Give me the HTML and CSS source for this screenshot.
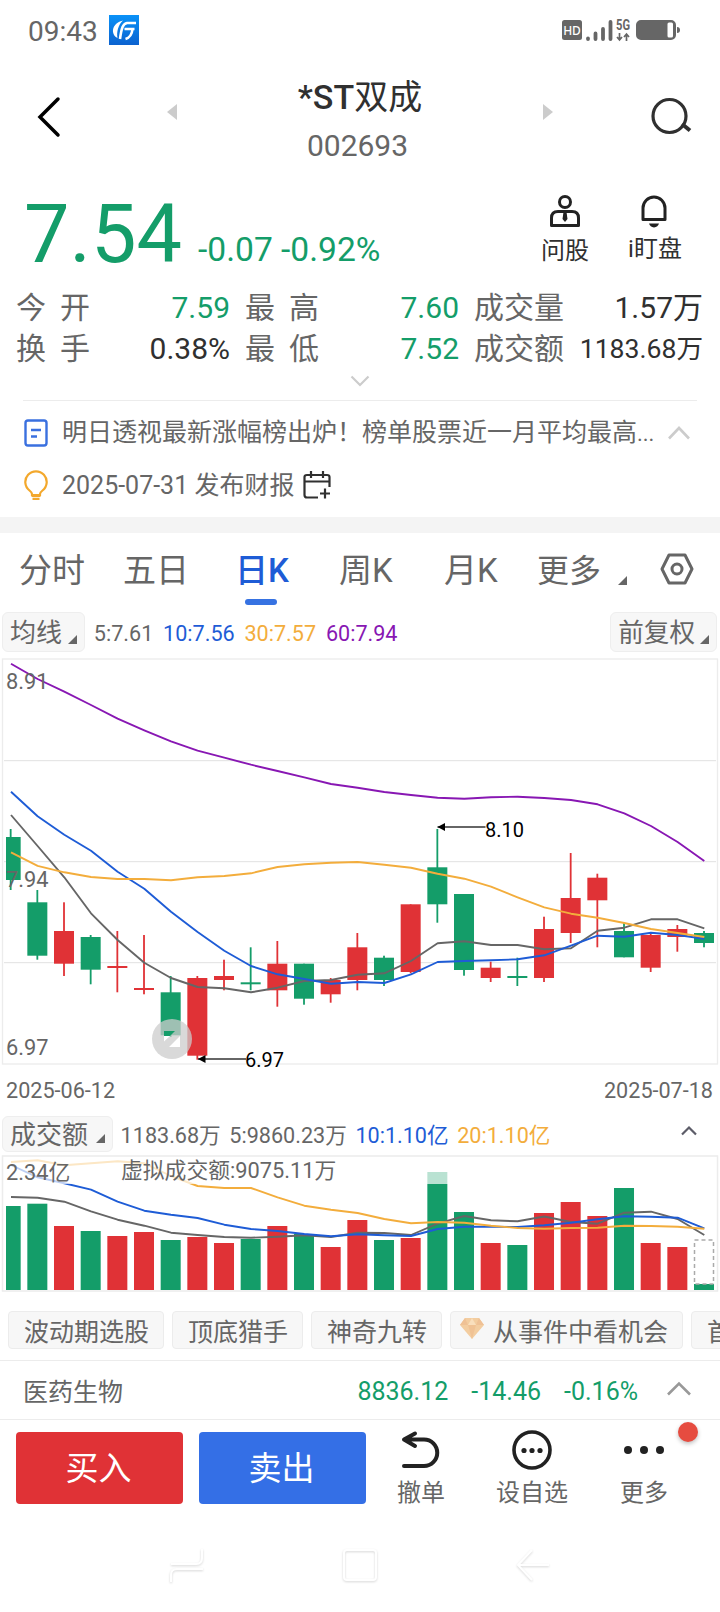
FILE: index.html
```html
<!DOCTYPE html>
<html lang="zh-CN">
<head>
    <meta charset="UTF-8">
    <meta name="viewport" content="width=device-width, initial-scale=1.0">
    <title>*ST双成 002693</title>
    <link rel="stylesheet" href="styles.css">
</head>
<body>
<div class="phone">

    <div class="status-bar">
        <span class="clock">09:43</span>
        <svg class="app-icon" width="30" height="30" viewBox="0 0 30 30">
            <defs>
                <linearGradient id="appBg" x1="0" y1="0" x2="0" y2="1">
                    <stop offset="0" stop-color="#0a92f8"/>
                    <stop offset="1" stop-color="#0b62cf"/>
                </linearGradient>
            </defs>
            <rect width="30" height="30" fill="url(#appBg)"/>
            <path d="M14 5.500C7 7 3.500 12 4 17C4.500 20 6 22 8.500 23C7.500 17 9 10 14 5.500Z" fill="#fff"/>
            <path d="M27 8H18C14 8.500 12.500 13 11 24M25.500 14H15.500M23.500 14C23 19.500 21.500 22.500 16.500 24" fill="none" stroke="#fff" stroke-width="2.600"/>
        </svg>
        <svg class="status-icons" width="120" height="22" viewBox="562 19 120 22">
            <rect x="562" y="20" width="20" height="20" rx="2.500" fill="#666"/>
            <text x="572" y="34.500" class="hd" text-anchor="middle">HD</text>
            <path d="M588 38.500v0.500M595.500 33.500v5.500M603 29v10M610.500 22v17" stroke="#666" stroke-width="3.800" stroke-linecap="round"/>
            <text x="616" y="30" class="net" textLength="14" lengthAdjust="spacingAndGlyphs">5G</text>
            <path d="M619.500 33v7M617 37l2.500 3l2.500-3M626.500 41v-7M624 37l2.500-3l2.500 3" fill="none" stroke="#666" stroke-width="1.700"/>
            <rect x="637" y="21" width="38" height="18" rx="4" fill="#666" stroke="#666" stroke-width="2"/>
            <rect x="667.500" y="22.500" width="5.500" height="15" rx="1.500" fill="#fff"/>
            <path d="M677 27q3 0 3 3t-3 3z" fill="#666"/>
        </svg>
    </div>

    <div class="header">
        <svg class="back" width="26" height="42" viewBox="0 0 26 42"><path d="M22 3L4 21L22 39" fill="none" stroke="#000" stroke-width="3.500" stroke-linecap="round"/></svg>
        <svg class="prev" width="10" height="16" viewBox="0 0 10 16"><path d="M10 0V16L0 8Z" fill="#ccc"/></svg>
        <div class="title">
            <div class="stock-name">*ST<span>双成</span></div>
            <div class="stock-code">002693</div>
        </div>
        <svg class="next" width="10" height="16" viewBox="0 0 10 16"><path d="M0 0V16L10 8Z" fill="#ccc"/></svg>
        <svg class="search" width="42" height="42" viewBox="0 0 42 42"><circle cx="19.500" cy="20" r="16.500" fill="none" stroke="#303030" stroke-width="3.200"/><path d="M32 28L40 34.500" stroke="#303030" stroke-width="4"/></svg>
    </div>

    <div class="quote">
        <span class="price">7.54</span>
        <span class="change">-0.07 -0.92%</span>
        <div class="quote-btn ask">
            <svg width="34" height="36" viewBox="0 0 34 36" fill="none" stroke="#222" stroke-width="3">
                <circle cx="17" cy="9" r="5.500"/>
                <path d="M3.500 32.500V25Q3.500 18.500 10 18.500H24Q30.500 18.500 30.500 25V32.500Z" stroke-linejoin="round"/>
                <path d="M15.500 19h3l1 7l-2.500 3l-2.500-3z" fill="#222" stroke="none"/>
            </svg>
            <span>问股</span>
        </div>
        <div class="quote-btn watch">
            <svg width="34" height="36" viewBox="0 0 34 36" fill="none" stroke="#222" stroke-width="3">
                <path d="M5 26.500V15A11 11 0 0 1 27 15V26.500Z" stroke-linejoin="round"/>
                <path d="M11 30.500H21Q20 34 16 34.500Q12 34 11 30.500Z" fill="#222" stroke="none"/>
            </svg>
            <span>i盯盘</span>
        </div>
    </div>

    <div class="stats">
        <span class="label wide">今开</span><span class="value green">7.59</span>
        <span class="label wide">最高</span><span class="value green">7.60</span>
        <span class="label">成交量</span><span class="value">1.57万</span>
        <span class="label wide">换手</span><span class="value">0.38%</span>
        <span class="label wide">最低</span><span class="value green">7.52</span>
        <span class="label">成交额</span><span class="value small">1183.68万</span>
    </div>
    <div class="expand">
        <svg width="20" height="12" viewBox="0 0 20 12"><path d="M1.500 1.500L10 10L18.500 1.500" fill="none" stroke="#ccc" stroke-width="2.200"/></svg>
    </div>

    <div class="notices">
        <div class="notice">
            <svg width="24" height="28" viewBox="0 0 24 28" fill="none" stroke="#3a70df" stroke-width="2.400"><rect x="1.500" y="1.500" width="21" height="25" rx="2.500"/><path d="M7 11H17M7 17.500H13"/></svg>
            <span class="notice-text">明日透视最新涨幅榜出炉！榜单股票近一月平均最高<span class="dots">...</span></span>
            <svg class="fold" width="24" height="14" viewBox="0 0 24 14"><path d="M2 12.500L12 2L22 12.500" fill="none" stroke="#ccc" stroke-width="2.600"/></svg>
        </div>
        <div class="notice">
            <svg width="24" height="30" viewBox="0 0 24 30" fill="none" stroke="#f3a82c" stroke-width="2.200"><path d="M8 25V24Q8 22.500 5.500 20.500A10.700 10.700 0 1 1 18.500 20.500Q16 22.500 16 24V25Z"/><path d="M7.500 26H16.500M8.500 28.800H15.500"/></svg>
            <span class="notice-text">2025-07-31 发布财报</span>
            <svg class="calendar" width="28" height="28" viewBox="0 0 28 28" fill="none" stroke="#303030" stroke-width="2.200"><path d="M15 26.500H4Q1.500 26.500 1.500 24V6Q1.500 4 4 4H24Q26.500 4 26.500 6V16M1.500 10.500H26.500M8 0V7M20 0V7M22 17.500V27.500M17 22.500H27"/></svg>
        </div>
    </div>

    <div class="tabs">
        <span class="tab">分时</span>
        <span class="tab">五日</span>
        <span class="tab active">日K</span>
        <span class="tab">周K</span>
        <span class="tab">月K</span>
        <span class="tab more">更多</span>
        <i class="corner"></i>
        <svg class="setting" width="34" height="32" viewBox="0 0 34 32" fill="none" stroke="#666" stroke-width="3"><path d="M9 2H25L32 16L25 30H9L2 16Z" stroke-linejoin="round"/><circle cx="17" cy="16" r="5"/></svg>
    </div>

    <div class="legend">
        <span class="tag">均线<i class="corner"></i></span>
        <span class="ma">5:7.61</span>
        <span class="ma blue">10:7.56</span>
        <span class="ma orange">30:7.57</span>
        <span class="ma purple">60:7.94</span>
        <span class="tag right">前复权<i class="corner"></i></span>
    </div>

    <svg id="kline" class="chart" width="720" height="412" viewBox="0 656 720 412"></svg>

    <div class="dates"><span>2025-06-12</span><span>2025-07-18</span></div>

    <div class="legend volume-legend">
        <span class="tag">成交额<i class="corner"></i></span>
        <span class="ma">1183.68万</span>
        <span class="ma">5:9860.23万</span>
        <span class="ma blue">10:1.10亿</span>
        <span class="ma orange">20:1.10亿</span>
        <svg class="fold" width="18" height="12" viewBox="0 0 18 12"><path d="M2 9.500L9 2.500L16 9.500" fill="none" stroke="#5c5c68" stroke-width="2.200"/></svg>
    </div>

    <svg id="volume" class="chart" width="720" height="140" viewBox="0 1154 720 140"></svg>

    <div class="chips">
        <span class="chip">波动期选股</span>
        <span class="chip">顶底猎手</span>
        <span class="chip">神奇九转</span>
        <span class="chip gem">
            <svg width="24" height="22" viewBox="0 0 24 22"><path d="M5 1H19L24 8L12 22L0 8Z" fill="#f3cda0"/><path d="M5 1L8 8H0ZM19 1L16 8H24Z" fill="#efc195"/><path d="M8 8H16L12 22Z" fill="#f0c294"/><path d="M8 8L12 1L16 8Z" fill="#f9dfbd"/></svg>从事件中看机会</span>
        <span class="chip">首</span>
    </div>

    <div class="sector">
        <span class="sector-name">医药生物</span>
        <span class="num">8836.12</span>
        <span class="num">-14.46</span>
        <span class="num">-0.16%</span>
        <svg width="26" height="15" viewBox="0 0 26 15"><path d="M2 13.500L13 2.500L24 13.500" fill="none" stroke="#999" stroke-width="2.600"/></svg>
    </div>

    <div class="actions">
        <div class="btn buy">买入</div>
        <div class="btn sell">卖出</div>
        <div class="action">
            <svg width="42" height="42" viewBox="0 0 42 42" fill="none" stroke="#222" stroke-width="4" stroke-linecap="round" stroke-linejoin="round"><path d="M15 4.500L4 10.500L15 17M5 10.500H24A13 13 0 0 1 24 37H4"/></svg>
            <span>撤单</span>
        </div>
        <div class="action wide">
            <svg width="42" height="42" viewBox="0 0 42 42"><circle cx="21" cy="21" r="18" fill="none" stroke="#222" stroke-width="3.600"/><g fill="#222"><circle cx="13" cy="21.500" r="2.600"/><circle cx="21" cy="21.500" r="2.600"/><circle cx="29" cy="21.500" r="2.600"/></g></svg>
            <span>设自选</span>
        </div>
        <div class="action last">
            <svg width="42" height="42" viewBox="0 0 42 42" fill="#222"><circle cx="5" cy="21" r="4"/><circle cx="21" cy="21" r="4"/><circle cx="37" cy="21" r="4"/></svg>
            <span>更多</span>
            <i class="badge"></i>
        </div>
    </div>

    <div class="nav-bar">
        <svg width="34" height="36" viewBox="0 0 34 36"><path d="M1 17H26Q32 17 32 11V2M1 35V28Q1 22 7 22H33"/></svg>
        <svg width="36" height="36" viewBox="0 0 36 36"><rect x="2" y="3" width="32" height="30" rx="3"/></svg>
        <svg width="34" height="36" viewBox="0 0 34 36"><path d="M16 3L2 18L16 33M2 18H33"/></svg>
    </div>
</div>
<script src="script.js"></script>
</body>
</html>
```

FILE: styles.css
```css
body {
    margin: 0;
    background: #fff;
    font-family: Roboto, "Noto Sans CJK SC", sans-serif;
    color: #666;
}

.phone {
    width: 720px;
    height: 1612px;
    overflow: hidden;
    background: #fff;
}

svg {
    display: block;
    flex: none;
}

/* status bar */
.status-bar {
    display: flex;
    align-items: center;
    height: 60px;
    padding: 0 38px 0 28px;
}

.clock {
    font-size: 28px;
    line-height: 32px;
    padding-top: 3px;
}

.app-icon {
    margin-left: 11px;
}

.status-icons {
    margin-left: auto;
    overflow: visible;
}

.hd {
    font-family: "Noto Sans", sans-serif;
    font-size: 12px;
    font-weight: 500;
    fill: #fff;
}

.net {
    font-size: 14px;
    font-weight: 700;
    fill: #666;
}

/* header */
.header {
    display: flex;
    height: 120px;
    padding: 0 28px 0 36px;
}

.back {
    margin-top: 36px;
}

.prev {
    margin: 44px 0 0 105px;
}

.title {
    width: 366px;
    text-align: center;
    margin-top: 16px;
}

.stock-name {
    font-size: 34px;
    line-height: 42px;
    font-weight: 500;
    color: #303030;
}

.stock-name span {
    font-weight: 400;
}

.stock-code {
    font-size: 30px;
    line-height: 36px;
    margin: 10px 5px 0 0;
}

.next {
    margin-top: 44px;
}

.search {
    margin: 36px 0 0 auto;
}

/* price */
.quote {
    display: flex;
    height: 107px;
}

.price {
    font-size: 81px;
    line-height: 96px;
    width: 174px;
    padding: 7px 0 0 24px;
    color: #149d69;
}

.change {
    font-size: 33.6px;
    line-height: 40px;
    margin-top: 50px;
    width: 339px;
    color: #149d69;
}

.quote-btn {
    display: flex;
    flex-direction: column;
    align-items: center;
    width: 56px;
    padding-top: 13px;
    font-size: 24px;
    line-height: 32px;
    color: #303030;
    white-space: nowrap;
}

.quote-btn span {
    margin-top: 6px;
}

.quote-btn.watch {
    margin-left: 34px;
}

.quote-btn.watch span {
    margin-top: 4px;
}

/* stats */
.stats {
    display: grid;
    grid-template-columns: 84px 130px 86px 143px 104px 140px;
    grid-auto-rows: 41px;
    padding-left: 16px;
    font-size: 30px;
    line-height: 41px;
    white-space: nowrap;
}

.label.wide {
    letter-spacing: 14px;
}

.label:nth-child(6n + 3),
.label:nth-child(6n + 5) {
    padding-left: 15px;
}

.value {
    text-align: right;
    color: #303030;
}

.value.green {
    color: #149d69;
}

.value.small {
    font-size: 26.6px;
}

.expand {
    display: flex;
    justify-content: center;
    padding-top: 6px;
    height: 25px;
}

/* notices */
.notices {
    border-bottom: 16px solid #f4f4f4;
    height: 117px;
}

.notice {
    display: flex;
    align-items: center;
    height: 42px;
    margin: 0 23px;
    padding-left: 1px;
    font-size: 25px;
    line-height: 32px;
    white-space: nowrap;
}

.notice:first-child {
    border-top: 1px solid #ececec;
    height: 63px;
}

.notice-text {
    margin: 1px 0 0 14px;
}

.dots {
    font-size: 22px;
}

.notice .fold {
    margin-left: auto;
    margin-right: 6px;
}

.calendar {
    margin-left: 9px;
}

/* tabs */
.tabs {
    display: grid;
    grid-template-columns: 104px 110px 106px 105px 93px 81px 42px 34px;
    height: 76px;
    padding-left: 19px;
    font-size: 33px;
    line-height: 40px;
}

.tab {
    padding-top: 18px;
}

.tab.more {
    font-size: 32px;
}

.tab.active {
    padding-left: 2px;
    color: #1e5cd6;
    font-weight: 500;
}

.tab.active::after {
    content: "";
    display: block;
    width: 32px;
    height: 6px;
    margin: 8px 0 0 10px;
    border-radius: 3px;
    background: #3672e2;
}

.corner {
    display: inline-block;
    border-left: 9px solid transparent;
    border-bottom: 9px solid #666;
    width: 0;
    height: 0;
}

.tabs .corner {
    margin-top: 43px;
}

.setting {
    margin-top: 20px;
}

/* chart legends */
.legend {
    display: flex;
    align-items: center;
    height: 47px;
    padding: 0 3px 0 2px;
    font-size: 21.6px;
    white-space: nowrap;
}

.tag {
    box-sizing: border-box;
    display: flex;
    align-items: center;
    height: 40px;
    padding: 0 7px 2px;
    border: 1px solid #eee;
    border-radius: 6px;
    background: #f7f7f7;
    font-size: 26px;
    margin: -2px -1px 0 0;
}

.tag .corner {
    margin: 18px 0 0 6px;
}

.tag.right {
    margin: -2px 0 0 auto;
    font-size: 25.6px;
}

.tag.right .corner {
    margin-left: 5px;
}

.ma {
    margin: 2px 0 0 9.8px;
}

.blue {
    color: #1e5cd6;
}

.orange {
    color: #f3ad3c;
}

.purple {
    color: #8817b3;
}

/* charts */
.chart {
    overflow: visible;
}

.axis {
    font-size: 21.8px;
    fill: #666;
}

.mark {
    font-size: 20px;
    fill: #000;
}

.dates {
    display: flex;
    justify-content: space-between;
    padding: 0 7px 0 6px;
    height: 45px;
    font-size: 21.6px;
    line-height: 46px;
}

.volume-legend {
    height: 41px;
}

.volume-legend .tag {
    height: 36px;
    margin-top: 0;
}

.volume-legend .tag .corner {
    margin: 11px 0 0 8px;
}

.volume-legend .ma {
    margin: 0 0 0 8.6px;
}

.volume-legend .fold {
    margin: -6px 19px 0 auto;
}

/* strategy chips */
.chips {
    display: flex;
    gap: 8px;
    height: 67px;
    box-sizing: border-box;
    padding: 17px 0 0 8px;
    border-bottom: 1px solid #ececec;
}

.chip {
    box-sizing: border-box;
    display: flex;
    flex: none;
    align-items: center;
    height: 38px;
    padding: 0 14px 1px 15px;
    border: 1px solid #ececec;
    border-radius: 4px;
    background: #f7f7f7;
    font-size: 25px;
}

.gem {
    padding-left: 9px;
}

.gem svg {
    margin: -4px 9px 0 0;
}

/* sector */
.sector {
    display: flex;
    align-items: center;
    height: 58px;
    padding: 0 28px 0 23px;
    border-bottom: 1px solid #ececec;
    font-size: 25px;
}

.sector-name {
    margin-right: auto;
}

.num {
    color: #149d69;
    margin: 2px 23px 0 0;
}

.sector svg {
    margin: -3px 0 0 5px;
}

/* bottom actions */
.actions {
    display: flex;
    height: 98px;
    padding: 12px 0 0 16px;
}

.btn {
    box-sizing: border-box;
    width: 167px;
    height: 72px;
    margin-right: 16px;
    padding-right: 2px;
    border-radius: 4px;
    color: #fff;
    font-size: 33px;
    line-height: 74px;
    text-align: center;
}

.buy {
    background: #e03236;
}

.sell {
    background: #346fe6;
}

.action {
    position: relative;
    display: flex;
    flex-direction: column;
    align-items: center;
    width: 78px;
    margin-top: -3px;
    font-size: 24px;
    line-height: 32px;
}

.action span {
    margin-top: 6px;
}

.action.wide {
    margin-left: 33px;
}

.action.last {
    margin-left: 34px;
}

.badge {
    position: absolute;
    left: 73px;
    top: -7px;
    width: 20px;
    height: 20px;
    border-radius: 50%;
    background: #e64c40;
    box-shadow: 0 2px 4px rgba(0, 0, 0, 0.25);
}

/* system navigation */
.nav-bar {
    display: flex;
    justify-content: space-between;
    padding: 17px 170px 0;
}

.nav-bar svg {
    fill: none;
    stroke: #fff;
    stroke-width: 2;
    filter: drop-shadow(0 1px 1px rgba(0, 0, 0, 0.16));
}
```

FILE: script.js
```js
const GREEN = "#149d69";
const RED = "#e03236";
const STEP = 26.667;
const LINE = { ma5: "#666", ma10: "#1e5cd6", ma30: "#f3ad3c", ma60: "#8817b3" };

// color, body top, body bottom, wick top, wick bottom
const candles = [
    ["g", 837, 880, 829, 890], ["g", 902.3, 955.7, 890, 959.7], ["r", 931, 963.7, 902.3, 976],
    ["g", 937, 969.7, 935, 984.3], ["r", 966, 968, 931, 992.3], ["r", 988, 990, 935, 994.3],
    ["g", 992.3, 1035.3, 976, 1037], ["r", 978, 1055.7, 976, 1059.7], ["r", 976, 980, 959.7, 990.3],
    ["g", 982.3, 984.3, 947.3, 990.3], ["r", 963.7, 990.3, 941, 1006.7], ["g", 963.7, 998.7, 963.7, 1004.7],
    ["r", 980, 994.3, 978, 1002.7], ["r", 947.3, 980, 933, 990.3], ["g", 957.7, 980, 955.7, 986],
    ["r", 904.3, 972, 904.3, 973.3], ["g", 867.3, 904.3, 829, 922.7], ["g", 894, 970, 894, 975.7],
    ["r", 967.7, 978, 961.7, 982], ["g", 976, 978, 957.7, 986], ["r", 929, 978, 916.7, 982],
    ["r", 898, 933, 853, 943], ["r", 877.7, 900.3, 873.7, 947.3], ["g", 931, 957.3, 922.7, 957.3],
    ["r", 935, 967.7, 933, 972], ["r", 929, 937, 925, 951.7], ["g", 933, 943, 931, 947.3]
];

const priceLines = [
    [LINE.ma60, [663.7, 679, 691.7, 705, 718.7, 730.3, 741.3, 750.7, 757.7, 764.7, 771, 777.3, 784, 787.8, 792, 795, 797.7, 798.7, 797.3, 796.7, 798, 800, 804.3, 813.3, 826, 842, 861]],
    [LINE.ma5, [815, 846, 877.3, 913.3, 940, 962.7, 978, 987, 988.3, 992.3, 987.7, 981, 980, 974.7, 973.3, 961, 943.3, 941.3, 945, 945, 949.3, 948.3, 930.7, 927.7, 919.3, 919.3, 928.3]],
    [LINE.ma10, [791.7, 816.3, 834.7, 850.7, 871.7, 888.7, 911.7, 932, 950.7, 966, 974.3, 979, 983.7, 982, 983, 974.3, 962, 961, 960.3, 959.3, 955.3, 945.7, 935.7, 936.7, 932.7, 935, 938.7]],
    [LINE.ma30, [852.3, 865.8, 872.3, 877, 879, 879, 880.3, 877.3, 876, 873.3, 867, 864.3, 862.7, 862, 864.7, 867.7, 873.7, 878.7, 886.7, 897.3, 907.3, 913.7, 917.7, 923, 929, 933, 937]]
];

const volumes = [1206, 1203.7, 1226, 1231, 1236, 1232, 1240, 1237, 1243, 1239, 1226, 1234, 1247, 1220, 1240, 1238, 1172, 1212, 1243, 1245, 1213, 1202, 1216, 1188, 1243, 1247, 1284];

const volumeLines = [
    [LINE.ma5, [1197, 1197.7, 1201.7, 1211.3, 1219.7, 1225.7, 1232.7, 1235, 1237, 1237.7, 1236.7, 1235.3, 1237, 1232.7, 1233, 1235, 1223.7, 1216, 1220.3, 1221.3, 1216.5, 1222, 1223.7, 1212.7, 1211.7, 1219, 1235]],
    [LINE.ma10, [1165, 1177.3, 1183.3, 1189.7, 1201.7, 1210.7, 1214.7, 1218, 1224.7, 1229, 1231, 1234, 1236.3, 1234.3, 1235.3, 1236, 1229, 1226.7, 1226.7, 1227, 1225.3, 1222.7, 1219.3, 1216.3, 1216.7, 1217.7, 1228.3]],
    [LINE.ma30, [1162, 1160.3, 1165.3, 1163.3, 1161.3, 1163.3, 1176, 1186, 1188, 1188, 1197.3, 1205.7, 1209.7, 1213, 1219, 1223.3, 1222, 1222.7, 1225.7, 1228, 1228.7, 1228, 1227.7, 1225.7, 1226, 1226.7, 1228.7]]
];

function centerX(i) {
    return 10.67 + STEP * i;
}

function rect(x, y, w, h, fill) {
    return `<rect x="${x}" y="${y}" width="${w}" height="${h}" fill="${fill}"/>`;
}

// bars are 20px wide, the first one is cut by the chart edge
function bar(i, top, bottom, fill) {
    const left = Math.max(6, centerX(i) - 10);
    return rect(left, top, centerX(i) + 10 - left, bottom - top, fill);
}

function polyline(color, ys) {
    const points = ys.map((y, i) => `${(centerX(i) + 0.3).toFixed(1)},${y}`).join(" ");
    return `<polyline points="${points}" fill="none" stroke="${color}" stroke-width="1.9" stroke-linejoin="round"/>`;
}

function text(x, y, cls, value) {
    return `<text x="${x}" y="${y}" class="${cls}">${value}</text>`;
}

function arrow(x, y) {
    return `<path d="M${x} ${y}H${x + 48}" stroke="#333" stroke-width="1.3"/><path d="M${x} ${y}l7.500 -4v8z" fill="#000"/>`;
}

function drawKline() {
    let out = '<rect x="2.500" y="659" width="715" height="405" fill="none" stroke="#ececec" stroke-width="1.3"/>';
    [760.5, 861.5, 962.5].forEach(y => {
        out += rect(4, y - 0.5, 712, 1.2, "#e6e6e6");
    });
    candles.forEach(([c, top, bottom, high, low], i) => {
        const fill = c === "g" ? GREEN : RED;
        out += rect(centerX(i) - 0.9, high, 1.8, low - high, fill);
        out += bar(i, top, bottom, fill);
    });
    priceLines.forEach(([color, ys]) => {
        out += polyline(color, ys);
    });
    out += text(6, 689, "axis", "8.91") + text(6, 887, "axis", "7.94") + text(6, 1055, "axis", "6.97");
    out += arrow(437.5, 827) + text(485, 837, "mark", "8.10");
    out += arrow(198, 1059) + text(245, 1067, "mark", "6.97");
    // fullscreen button
    out += '<circle cx="172" cy="1039" r="20" fill="#ccc" fill-opacity="0.75"/>';
    out += `<path d="M164 1031h11l-5 5h-6z" fill="${GREEN}"/><path d="M164 1036h6l-6 5.500zM180 1036v11h-11z" fill="#fff"/>`;
    document.getElementById("kline").innerHTML = out;
}

function drawVolume() {
    let out = '<rect x="2.500" y="1156" width="715" height="135" fill="none" stroke="#ececec" stroke-width="1.5"/>';
    volumes.forEach((top, i) => {
        out += bar(i, top, 1290, candles[i][0] === "g" ? GREEN : RED);
    });
    out += '<rect x="694.500" y="1240" width="19" height="44" fill="none" stroke="#aaa" stroke-width="1.5" stroke-dasharray="4 3"/>';
    volumeLines.forEach(([color, ys]) => {
        out += polyline(color, ys);
    });
    // veil under the captions
    out += '<rect x="4" y="1157" width="712" height="27" fill="#fff" fill-opacity="0.7"/>';
    out += text(6, 1180, "axis", "2.34亿") + text(121, 1178, "axis", "虚拟成交额:9075.11万");
    document.getElementById("volume").innerHTML = out;
}

drawKline();
drawVolume();
```
